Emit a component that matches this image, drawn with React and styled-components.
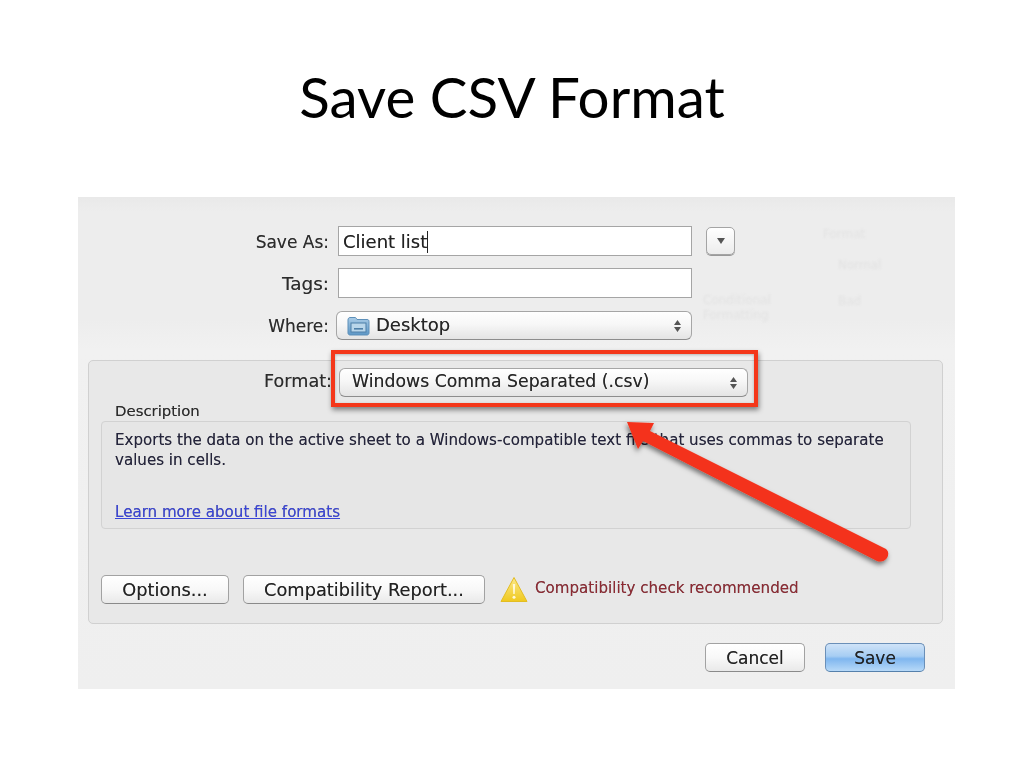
import React from "react";
import styled, { createGlobalStyle } from "styled-components";

const Global = createGlobalStyle`
  html, body { margin: 0; padding: 0; background: #fff; }
  body { width: 1024px; height: 768px; overflow: hidden; }
`;

const Slide = styled.div`
  position: relative;
  width: 1024px;
  height: 768px;
  background: #fff;
  padding-top: 62px;
  box-sizing: border-box;
`;

const Title = styled.h1`
  margin: 0;
  height: 135px;
  text-align: center;
  font: 400 56.5px/68px "Lato", sans-serif;
  color: #000;
`;

const Dialog = styled.div`
  position: relative;
  margin-left: 78px;
  width: 877px;
  height: 492px;
  box-sizing: border-box;
  padding: 29px 12px 0 0;
  background: linear-gradient(#e9e9e9, #ededed 3%, #ededed 25%, #f1f1f1 31%, #efefef);
  font-family: "DejaVu Sans", sans-serif;
  color: #222;
  text-shadow: 0 0 0.5px rgba(0, 0, 0, 0.45);
  filter: blur(0.4px);
  overflow: hidden;
`;

const Ghost = styled.span`
  position: absolute;
  left: ${(p) => p.$x}px;
  top: ${(p) => p.$y}px;
  font-size: 12px;
  color: #e2e2e2;
  text-shadow: none;
  filter: blur(1.3px);
  white-space: nowrap;
`;

const Row = styled.div`
  display: flex;
  align-items: center;
  height: ${(p) => p.$h || 30}px;
  margin-bottom: ${(p) => p.$mb ?? 12}px;
`;

const Label = styled.label`
  width: ${(p) => p.$w || 251}px;
  text-align: right;
  flex: none;
  font-size: ${(p) => p.$size || 17}px;
  color: #2c2c2c;
  position: relative;
  top: ${(p) => p.$shift || 0}px;
`;

const TextInput = styled.div`
  margin-left: 9px;
  width: 354px;
  height: 30px;
  box-sizing: border-box;
  border: 1px solid #a5a5a5;
  background: #fff;
  padding-left: 4px;
  font-size: 18px;
  line-height: 30px;
  color: #222;
  display: flex;
`;

const Caret = styled.i`
  width: 1px;
  height: 22px;
  margin: 4px 0 0 0;
  background: #222;
`;

const Disclosure = styled.div`
  margin-left: 14px;
  width: 29px;
  height: 28px;
  box-sizing: border-box;
  border: 1px solid #a4a4a4;
  border-radius: 5px;
  background: linear-gradient(#fff, #ececec);
  box-shadow: 0 1px 0 #999;
  display: flex;
  align-items: center;
  justify-content: center;
`;

const DownTriangle = styled.i`
  width: 0;
  height: 0;
  border: 4.5px solid transparent;
  border-top: 6px solid #555;
  border-bottom: 0;
`;

const Popup = styled.div`
  margin-left: ${(p) => p.$ml}px;
  width: ${(p) => p.$w}px;
  height: 29px;
  box-sizing: border-box;
  border: 1px solid #a6a6a6;
  border-bottom-color: #8d8d8d;
  border-radius: 6px;
  padding: 0 9px 0 ${(p) => p.$pl}px;
  background: linear-gradient(#fff, #f7f7f7 45%, #e4e4e4);
  display: flex;
  align-items: center;
  gap: 6px;
  font-size: ${(p) => p.$size}px;
  color: #262626;
`;

const PopupText = styled.span`
  flex: 1;
  white-space: nowrap;
  padding-bottom: ${(p) => p.$pb || 1}px;
`;

const Panel = styled.section`
  margin: 20px 0 0 10px;
  height: 264px;
  box-sizing: border-box;
  padding: 7px 12px 0 12px;
  background: #e8e8e8;
  border: 1px solid #d0d0d0;
  border-radius: 5px;
`;

const DescHeading = styled.div`
  margin: 5px 0 0 14px;
  height: 19px;
  font-size: 14.9px;
  line-height: 19px;
  color: #2b2b2b;
`;

const DescBox = styled.div`
  width: 810px;
  height: 108px;
  box-sizing: border-box;
  padding: 8px 13px 0;
  border: 1px solid #d2d2d2;
  border-radius: 4px;
  background: #e6e6e6;
  font-size: 15.08px;
  line-height: 20px;
  color: #24243c;
`;

const Learn = styled.a`
  display: block;
  margin-top: 32px;
  color: #3a45d8;
  text-decoration: underline;
`;

const ActionRow = styled.div`
  display: flex;
  align-items: center;
  margin-top: 46px;
`;

const Button = styled.button`
  width: ${(p) => p.$w}px;
  height: 29px;
  margin-left: ${(p) => p.$ml || 0}px;
  padding: 0;
  box-sizing: border-box;
  border: 1px solid ${(p) => (p.$primary ? "#6a8fb8" : "#a2a2a2")};
  border-bottom-color: ${(p) => (p.$primary ? "#5580ab" : "#8a8a8a")};
  border-radius: 5px;
  background: ${(p) =>
    p.$primary
      ? "linear-gradient(#cfe3f8, #a6cdf3 45%, #7fb6ef 55%, #b7d9f8)"
      : "linear-gradient(#fff, #f8f8f8 50%, #e9e9e9)"};
  font: 400 ${(p) => p.$size || 17}px "DejaVu Sans", sans-serif;
  color: #222;
  text-shadow: inherit;
`;

const WarnIcon = styled.svg`
  margin-left: 15px;
  flex: none;
`;

const WarnText = styled.span`
  margin-left: 7px;
  font-size: 15.1px;
  color: #8e2a33;
  position: relative;
  top: -2px;
`;

const Footer = styled.div`
  display: flex;
  justify-content: flex-end;
  margin: 19px 18px 0 0;
  gap: 20px;
`;

const Stepper = () => (
  <svg width="9" height="14" viewBox="0 0 9 14">
    <path d="M4.5 1L8 6H1zM4.5 13L1 8h7z" fill="#555" />
  </svg>
);

const FolderIcon = () => (
  <svg width="23" height="20" viewBox="0 0 23 20">
    <defs>
      <linearGradient id="fold" x1="0" y1="0" x2="0" y2="1">
        <stop offset="0" stopColor="#a9cbe6" />
        <stop offset="1" stopColor="#5d97c6" />
      </linearGradient>
    </defs>
    <path d="M1 4c0-1.5.8-2.5 2-2.5h5c1 0 1.5 1 2 2h10c1.5 0 2 .8 2 2V17c0 1-.8 2-2 2H3c-1.2 0-2-1-2-2z" fill="url(#fold)" stroke="#5c8fb9" />
    <rect x="4" y="7" width="15" height="9" fill="#b9d6ea" stroke="#4d7fa8" />
    <rect x="7" y="12" width="9" height="1.6" fill="#4d7fa8" />
  </svg>
);

const Highlight = styled.div`
  position: absolute;
  left: 331px;
  top: 350px;
  width: 427px;
  height: 57px;
  box-sizing: border-box;
  border: 4px solid #f4371a;
  box-shadow: 1px 3px 5px rgba(0, 0, 0, 0.45), inset 0 1px 3px rgba(0, 0, 0, 0.25);
`;

const ArrowSvg = styled.svg`
  position: absolute;
  left: 0;
  top: 0;
  overflow: visible;
  pointer-events: none;
`;

export default function App() {
  return (
    <Slide>
      <Global />
      <Title>Save CSV Format</Title>
      <Dialog>
        <Ghost $x={745} $y={30}>Format</Ghost>
        <Ghost $x={760} $y={61}>Normal</Ghost>
        <Ghost $x={625} $y={96}>Conditional</Ghost>
        <Ghost $x={625} $y={111}>Formatting</Ghost>
        <Ghost $x={760} $y={97}>Bad</Ghost>
        <Row>
          <Label $shift={1}>Save As:</Label>
          <TextInput>Client list<Caret /></TextInput>
          <Disclosure><DownTriangle /></Disclosure>
        </Row>
        <Row $mb={13}>
          <Label $size={18.4}>Tags:</Label>
          <TextInput />
        </Row>
        <Row $h={29} $mb={0}>
          <Label>Where:</Label>
          <Popup $ml={7} $w={356} $pl={10} $size={18}>
            <FolderIcon />
            <PopupText $pb={2}>Desktop</PopupText>
            <Stepper />
          </Popup>
        </Row>
        <Panel>
          <Row $h={29} $mb={0}>
            <Label $w={231} $size={17.6} $shift={-2}>Format:</Label>
            <Popup $ml={7} $w={409} $pl={12} $size={17.3}>
              <PopupText $pb={4}>Windows Comma Separated (.csv)</PopupText>
              <Stepper />
            </Popup>
          </Row>
          <DescHeading>Description</DescHeading>
          <DescBox>
            Exports the data on the active sheet to a Windows-compatible text file that uses commas to separate values in cells.
            <Learn>Learn more about file formats</Learn>
          </DescBox>
          <ActionRow>
            <Button $w={128} $size={17.8}>Options...</Button>
            <Button $w={242} $ml={14} $size={17.8}>Compatibility Report...</Button>
            <WarnIcon width="28" height="27" viewBox="0 0 28 27">
              <defs>
                <linearGradient id="warn" x1="0" y1="0" x2="0" y2="1">
                  <stop offset="0" stopColor="#fbe88a" />
                  <stop offset="1" stopColor="#f0c91e" />
                </linearGradient>
              </defs>
              <path d="M14 1.5L27 25.5H1z" fill="url(#warn)" stroke="#e3bd22" strokeLinejoin="round" />
              <path d="M12.8 8h2.4l-.5 10h-1.4z" fill="#fff8d8" />
              <circle cx="14" cy="21.2" r="1.5" fill="#fff8d8" />
            </WarnIcon>
            <WarnText>Compatibility check recommended</WarnText>
          </ActionRow>
        </Panel>
        <Footer>
          <Button $w={100}>Cancel</Button>
          <Button $w={100} $primary>Save</Button>
        </Footer>
      </Dialog>
      <Highlight />
      <ArrowSvg width="1024" height="768" viewBox="0 0 1024 768">
        <defs>
          <filter id="arrowShadow" x="-10%" y="-10%" width="120%" height="130%">
            <feDropShadow dx="-1" dy="3" stdDeviation="2.5" floodColor="#000" floodOpacity="0.5" />
          </filter>
        </defs>
        <path
          d="M627 422L654 423L650 431L886 549Q890 552 887 558Q883 563 877 561L643 441L638 449Z"
          fill="#f4301a"
          filter="url(#arrowShadow)"
        />
      </ArrowSvg>
    </Slide>
  );
}
